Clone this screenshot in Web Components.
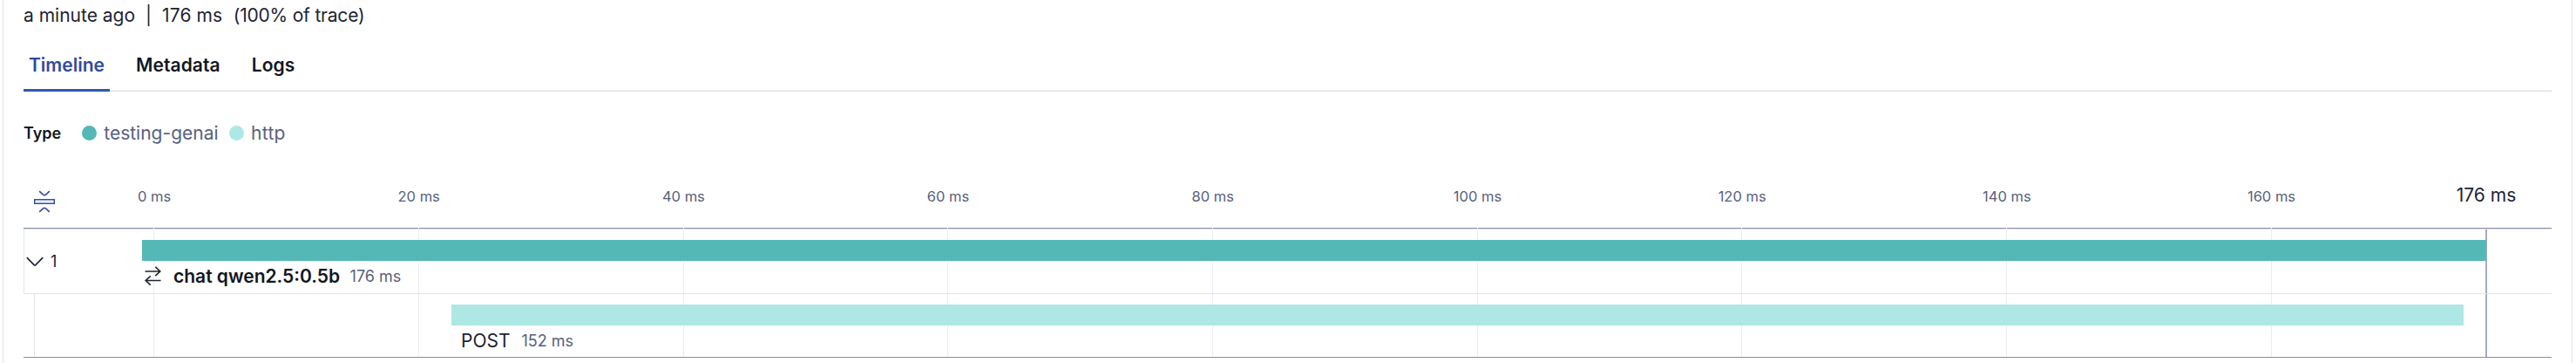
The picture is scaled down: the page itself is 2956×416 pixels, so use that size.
<!DOCTYPE html>
<html lang="en">
<head>
<meta charset="utf-8">
<title>Trace timeline</title>
<style>
  html, body { margin: 0; background: #fff; overflow: hidden; }
  body { font-family: Inter, "Liberation Sans", sans-serif; font-size: 21px; color: #1d2433; }
</style>
</head>
<body>
<trace-panel>
  <trace-summary></trace-summary>
  <trace-tabs>
    <trace-tab selected>Timeline</trace-tab>
    <trace-tab>Metadata</trace-tab>
    <trace-tab>Logs</trace-tab>
  </trace-tabs>
  <trace-legend></trace-legend>
  <trace-waterfall></trace-waterfall>
</trace-panel>
<script>
const define = (name, html) => {
  const t = document.createElement('template');
  t.innerHTML = html;
  customElements.define(name, class extends HTMLElement {
    constructor() {
      super();
      this.attachShadow({ mode: 'open' }).append(t.content.cloneNode(true));
    }
  });
};

define('trace-panel', `
<style>
  :host { display: flex; flex-direction: column; box-sizing: border-box; width: 2949px; height: 416px;
    margin-left: 3px; padding: 0 23px; border: solid #e3e4e8; border-width: 0 1px; overflow: hidden; }
</style><slot></slot>`);

define('trace-summary', `
<style>
  :host { display: flex; align-items: center; box-sizing: border-box; height: 34px; padding-top: 2px; white-space: pre; line-height: 32px; }
  i { font-style: normal; width: 31px; text-align: center; }
  .d { margin-right: 12.5px; letter-spacing: .1px; }
  .p { letter-spacing: -.2px; }
</style><span>a minute ago</span><i>|</i><span class="d">176 ms</span><span class="p">(100% of trace)</span>`);

define('trace-tabs', `
<style>
  :host { display: flex; gap: 24px; height: 71px; box-sizing: border-box;
    background: linear-gradient(#f0f0f2, #f0f0f2) 0 69px / 100% 1px no-repeat, linear-gradient(#e0e1e4, #e0e1e4) 0 70px / 100% 1px no-repeat; }
</style><slot></slot>`);

define('trace-tab', `
<style>
  :host { display: block; box-sizing: border-box; height: 71px; padding: 26px 6px 0; line-height: 30px; font-weight: 600; color: #111722; letter-spacing: .08px; }
  :host([selected]) { color: #2f4aa0; border-bottom: 3px solid #2f56b8; letter-spacing: 0; }
</style><slot></slot>`);

define('trace-legend', `
<style>
  :host { display: flex; align-items: center; height: 95px; line-height: 30px; color: #57617d; }
  b { font-size: 18px; font-weight: 600; color: #111722; margin-right: 24px; }
  i { width: 17px; height: 17px; border-radius: 50%; margin-right: 8px; }
  .g { background: #54b8b6; } .h { background: #ade8e4; }
  .a { margin-right: 12.5px; }
  .z { letter-spacing: .3px; }
</style><b>Type</b><i class="g"></i><span class="a">testing-genai</span><i class="h"></i><span class="z">http</span>`);

define('time-axis', `
<style>
  :host { display: grid; grid-template-columns: 104px 2797px; height: 61px; }
  svg { display: block; margin: 18px 0 0 12px; }
  .ticks { display: grid; grid-template-columns: repeat(8, 303.7px) 246.5px 120px; margin-left: -6px; width: 2797px; }
  span { justify-self: start; display: flex; justify-content: center; width: 104px; white-space: nowrap; line-height: 30px; font-size: 16.5px; color: #57617d; padding-top: 10px; }
  .end { font-size: 21px; color: #1d2433; padding-top: 9px; }
</style>
<svg width="24" height="26" viewBox="0 0 24 26" fill="none" stroke="#344a9c" stroke-width="1.6"><path d="M6.2 1.2l4.2 3.9q1.6 1.1 3.2 0l4.2-3.9M6.2 24.8l4.2-3.9q1.6-1.1 3.2 0l4.2 3.9"/><rect x=".7" y="10.7" width="22.6" height="4.6" fill="#e8edfc" stroke-width="1.4"/></svg>
<div class="ticks"><span>0 ms</span><span>20 ms</span><span>40 ms</span><span>60 ms</span><span>80 ms</span><span>100 ms</span><span>120 ms</span><span>140 ms</span><span>160 ms</span><span class="end">176 ms</span></div>`);

define('grid-lines', `
<style>
  :host { display: grid; grid-template-columns: repeat(8, 303.7px) 245.9px 2px; padding-left: 149.3px; }
  i { width: 1px; background: #e9ecf3; }
  i:first-child { width: 2px; background: #eef0f6; }
  .end { width: 2px; background: #a3acc2; margin-top: 2px; }
</style><i></i><i></i><i></i><i></i><i></i><i></i><i></i><i></i><i></i><i class="end"></i>`);

define('span-row', `
<style>
  :host { display: grid; grid-template-columns: var(--start) 1fr; height: 74px; box-sizing: border-box; }
  .bar { height: 24px; width: var(--w); background: var(--c); margin-top: 12px; }
  .label { display: flex; align-items: center; height: 34px; white-space: pre; }
</style>
<div><slot name="toggle"></slot></div><div><div class="bar"></div><div class="label"><slot></slot></div></div>`);

define('span-toggle', `
<style>
  :host { display: flex; align-items: center; height: 72px; font-size: 18px; }
  svg { margin: 1px 8px 0 2px; }
</style><svg width="20" height="12" viewBox="0 0 20 12" fill="none" stroke="#1d2433" stroke-width="1.7"><path d="M.8 1.2l8.3 8.5q.9.8 1.8 0l8.3-8.5"/></svg><span>1</span>`);

define('trace-waterfall', `
<style>
  :host { display: block; width: 2901px; }
  .plot { display: grid; height: 149px; }
  .plot > * { grid-area: 1 / 1; }
  .base { background: linear-gradient(#858fab, #858fab) 0 0 / 100% 1px no-repeat, linear-gradient(#dfe2ea, #dfe2ea) 0 1px / 100% 1px no-repeat, linear-gradient(#858fa6, #858fa6) 0 148px / 100% 1px no-repeat; }
  grid-lines { height: 148px; }
  .rows { padding-top: 2px; }
  .one { --start: 135px; --w: 2690px; --c: #54b8b6; border-bottom: 1px solid #dfe2ea; border-left: 1px solid #e3e6ee; }
  .two { --start: 491px; --w: 2309px; --c: #ade8e4; height: 72px; }
  .guide { width: 1px; height: 72px; background: #dfe2ea; margin-left: 12px; }
  b { font-weight: 600; color: #111722; margin-left: 14px; }
  .icon { margin-left: 3px; }
  small { font-size: 18px; color: #57617d; margin-left: 13px; }
  b + small { margin-left: 11.5px; }
  .post { margin-left: 11px; }
</style>
<time-axis></time-axis>
<div class="plot">
  <div class="base"></div>
  <grid-lines></grid-lines>
  <div class="rows">
    <span-row class="one"><span-toggle slot="toggle"></span-toggle><svg class="icon" width="19" height="22" viewBox="0 0 19 22" fill="none" stroke="#1d2433" stroke-width="1.6"><path d="M.5 6H18M12.3.8L17.8 6l-5.5 5.2M18.5 16.5H1M6.7 11.3L1.2 16.5l5.5 5.2"/></svg><b>chat qwen2.5:0.5b</b><small>176 ms</small></span-row>
    <span-row class="two"><div slot="toggle" class="guide"></div><span class="post">POST</span><small>152 ms</small></span-row>
  </div>
</div>`);
</script>
</body>
</html>
